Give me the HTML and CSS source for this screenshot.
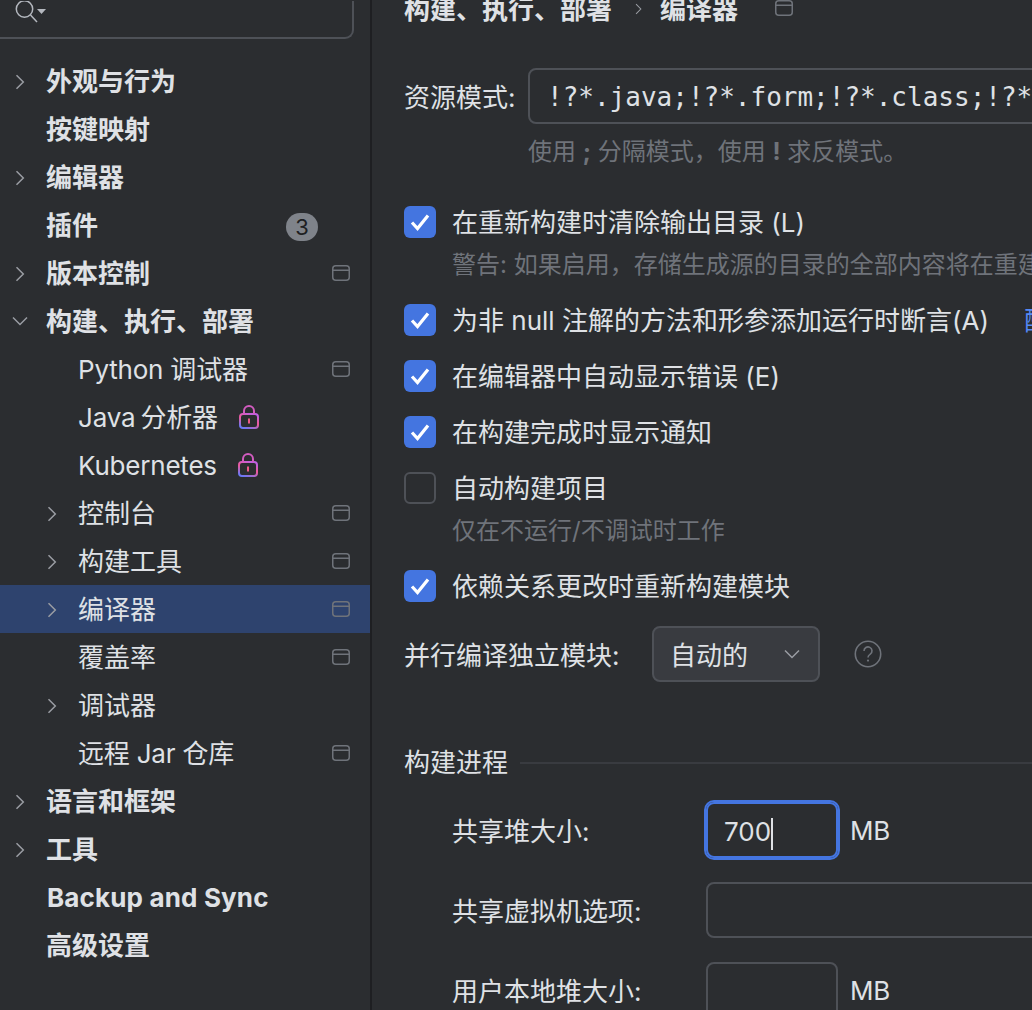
FILE: index.html
```html
<!DOCTYPE html>
<html lang="zh">
<head>
  <meta charset="utf-8">
  <title>设置 - 编译器</title>
  <link rel="stylesheet" href="styles.css">
</head>
<body>
  <svg class="defs" width="0" height="0">
    <defs>
      <linearGradient id="lockgrad" x1="0.7" y1="0" x2="0.2" y2="1">
        <stop offset="0" stop-color="#c060e0"/>
        <stop offset="0.45" stop-color="#ef5a9a"/>
        <stop offset="1" stop-color="#6a78f5"/>
      </linearGradient>
      <symbol id="win" viewBox="0 0 18 16">
        <rect x="0.75" y="0.75" width="16.5" height="14.5" rx="3" fill="none" stroke="#6f737a" stroke-width="1.5"/>
        <path d="M1 5.25h16" stroke="#6f737a" stroke-width="1.5"/>
      </symbol>
      <symbol id="right" viewBox="0 0 10 16">
        <path d="M1.5 1.2 8.3 8l-6.8 6.8" fill="none" stroke="#9a9da3" stroke-width="1.5"/>
      </symbol>
      <symbol id="down" viewBox="0 0 16 10">
        <path d="M1 1.5 8 8.5l7-7" fill="none" stroke="#9a9da3" stroke-width="1.5"/>
      </symbol>
      <symbol id="lock" viewBox="0 0 20 24">
        <rect x="1" y="9" width="18" height="14" rx="3" fill="none" stroke="url(#lockgrad)" stroke-width="2"/>
        <path d="M5 9V6a5 5 0 0 1 10 0v3" fill="none" stroke="#d25cc0" stroke-width="2"/>
        <path d="M10 13.5v5" stroke="#ef5a8a" stroke-width="2"/>
      </symbol>
      <symbol id="check" viewBox="0 0 32 32">
        <path d="M8 16.5l5.5 6L24 9.5" fill="none" stroke="#fff" stroke-width="3.2"/>
      </symbol>
    </defs>
  </svg>

  <div class="sidebar">
    <div class="search">
      <svg class="search-icon" width="34" height="24" viewBox="0 0 34 24">
        <circle cx="9.5" cy="8" r="8.2" fill="none" stroke="#b4b8bf" stroke-width="1.5"/>
        <path d="M15.5 14l6.5 7" stroke="#b4b8bf" stroke-width="1.5"/>
        <path d="M22 8h9l-4.5 5z" fill="#b4b8bf"/>
      </svg>
    </div>

    <ul class="tree">
      <li class="row top"><span class="arrow"><svg class="chev"><use href="#right"/></svg></span>外观与行为</li>
      <li class="row top"><span class="arrow"></span>按键映射</li>
      <li class="row top"><span class="arrow"><svg class="chev"><use href="#right"/></svg></span>编辑器</li>
      <li class="row top"><span class="arrow"></span>插件<span class="badge">3</span></li>
      <li class="row top"><span class="arrow"><svg class="chev"><use href="#right"/></svg></span>版本控制<svg class="win"><use href="#win"/></svg></li>
      <li class="row top"><span class="arrow"><svg class="chev-down"><use href="#down"/></svg></span>构建、执行、部署</li>
      <li class="row sub"><span class="arrow"></span><span class="latin">Python 调试器</span><svg class="win"><use href="#win"/></svg></li>
      <li class="row sub"><span class="arrow"></span><span class="latin java">Java 分析器</span><svg class="lock"><use href="#lock"/></svg></li>
      <li class="row sub"><span class="arrow"></span><span class="latin only-latin">Kubernetes</span><svg class="lock"><use href="#lock"/></svg></li>
      <li class="row sub"><span class="arrow"><svg class="chev"><use href="#right"/></svg></span>控制台<svg class="win"><use href="#win"/></svg></li>
      <li class="row sub"><span class="arrow"><svg class="chev"><use href="#right"/></svg></span>构建工具<svg class="win"><use href="#win"/></svg></li>
      <li class="row sub selected"><span class="arrow"><svg class="chev"><use href="#right"/></svg></span>编译器<svg class="win"><use href="#win"/></svg></li>
      <li class="row sub"><span class="arrow"></span>覆盖率<svg class="win"><use href="#win"/></svg></li>
      <li class="row sub"><span class="arrow"><svg class="chev"><use href="#right"/></svg></span>调试器</li>
      <li class="row sub"><span class="arrow"></span><span class="latin">远程 Jar 仓库</span><svg class="win"><use href="#win"/></svg></li>
      <li class="row top"><span class="arrow"><svg class="chev"><use href="#right"/></svg></span>语言和框架</li>
      <li class="row top"><span class="arrow"><svg class="chev"><use href="#right"/></svg></span>工具</li>
      <li class="row top"><span class="arrow"></span><span class="backup only-latin">Backup and Sync</span></li>
      <li class="row top"><span class="arrow"></span>高级设置</li>
    </ul>
  </div>

  <div class="main">
    <div class="crumbs">
      <span>构建、执行、部署</span>
      <svg class="crumb-sep"><use href="#right"/></svg>
      <span>编译器</span>
      <svg class="crumb-win"><use href="#win"/></svg>
    </div>

    <div class="pattern-row">
      <label class="pattern-label">资源模式:</label>
      <div class="input pattern-input">!?*.java;!?*.form;!?*.class;!?*.groovy;!?*.scala;!?*.flex</div>
    </div>
    <p class="hint pattern-hint">使用 <b>;</b> 分隔模式，使用 <b>!</b> 求反模式。</p>

    <div class="check-row first"><span class="box on"><svg><use href="#check"/></svg></span>在重新构建时清除输出目录 (L)</div>
    <p class="hint check-hint">警告: 如果启用，存储生成源的目录的全部内容将在重建时清除</p>
    <div class="check-row after-hint"><span class="box on"><svg><use href="#check"/></svg></span>为非 null 注解的方法和形参添加运行时断言(A)<a class="link">配置</a></div>
    <div class="check-row"><span class="box on"><svg><use href="#check"/></svg></span>在编辑器中自动显示错误 (E)</div>
    <div class="check-row"><span class="box on"><svg><use href="#check"/></svg></span>在构建完成时显示通知</div>
    <div class="check-row"><span class="box"></span>自动构建项目</div>
    <p class="hint check-hint">仅在不运行/不调试时工作</p>
    <div class="check-row after-hint"><span class="box on"><svg><use href="#check"/></svg></span>依赖关系更改时重新构建模块</div>

    <div class="combo-row">
      <label>并行编译独立模块:</label>
      <div class="combo">自动的<svg class="combo-arrow"><use href="#down"/></svg></div>
      <svg class="help" width="28" height="28" viewBox="0 0 28 28">
        <circle cx="14" cy="14" r="12.7" fill="none" stroke="#6f737a" stroke-width="1.6"/>
        <path d="M10 11a4 4 0 1 1 6.3 3.2c-1.4 1-2.3 1.7-2.3 3.3" fill="none" stroke="#6f737a" stroke-width="1.6"/>
        <circle cx="14" cy="20.6" r="1.1" fill="#6f737a"/>
      </svg>
    </div>

    <div class="section"><span class="section-title">构建进程</span><i class="section-line"></i></div>

    <div class="field">
      <label>共享堆大小:</label>
      <div class="input small focused">700<i class="caret"></i></div>
      <span class="unit">MB</span>
    </div>
    <div class="field">
      <label>共享虚拟机选项:</label>
      <div class="input wide"></div>
    </div>
    <div class="field">
      <label>用户本地堆大小:</label>
      <div class="input small"></div>
      <span class="unit">MB</span>
    </div>
  </div>
</body>
</html>
```

FILE: styles.css
```css
* {
  box-sizing: border-box;
}

html, body {
  height: 1010px;
  margin: 0;
  overflow: hidden;
}

body {
  display: flex;
  background-color: #2b2d30;
  color: #dfe1e5;
  font-family: Inter, "Noto Sans CJK SC", sans-serif;
  font-size: 26px;
}

.defs {
  position: absolute;
}

/* left tree */
.sidebar {
  width: 372px;
  flex: none;
  border-right: 2px solid #1e1f22;
}

.search {
  width: 354px;
  height: 38px;
  border-right: 2px solid #4e5157;
  border-bottom: 2px solid #4e5157;
  border-bottom-right-radius: 9px;
  padding-left: 15px;
}

.search-icon {
  display: block;
  margin-top: 1px;
}

.tree {
  list-style: none;
  margin: 18px 0 0;
  padding: 0;
}

.row {
  display: flex;
  align-items: center;
  height: 48px;
  padding-right: 20px;
  padding-bottom: 4px;
  white-space: nowrap;
}

.top {
  font-weight: 700;
}

.sub {
  padding-left: 32px;
}

.selected {
  background-color: #2e436e;
}

.arrow {
  display: flex;
  width: 46px;
  flex: none;
  margin-top: 6px;
  padding-left: 15px;
}

.chev {
  width: 10px;
  height: 16px;
}

.chev-down {
  width: 16px;
  height: 10px;
  margin-top: -2px;
  margin-left: -3px;
}

.latin {
  letter-spacing: -0.2px;
}

.java {
  word-spacing: -2px;
}

.backup {
  margin-left: 1px;
  letter-spacing: 0.15px;
}

.only-latin {
  margin-top: 4px;
}

.win {
  width: 18px;
  height: 16px;
  margin-left: auto;
  margin-top: 4px;
}

.lock {
  width: 20px;
  height: 24px;
  margin-left: 21px;
  margin-top: 4px;
}

.badge {
  width: 32px;
  height: 28px;
  margin-left: auto;
  margin-right: 32px;
  margin-top: 8px;
  border-radius: 14px;
  background-color: #7f838a;
  color: #1e1f22;
  font-size: 22px;
  font-weight: 400;
  line-height: 28px;
  text-align: center;
}

/* right panel */
.main {
  flex: 1;
  min-width: 0;
  overflow: hidden;
  padding-left: 32px;
  white-space: nowrap;
}

.crumbs {
  display: flex;
  align-items: flex-end;
  height: 22px;
  font-weight: 700;
  line-height: 24px;
  overflow: hidden;
}

.crumb-sep {
  width: 7px;
  height: 12px;
  margin: 0 18px 7px 23px;
}

.crumb-win {
  width: 18px;
  height: 16px;
  margin: 0 0 6px 37px;
}

.pattern-row {
  display: flex;
  align-items: center;
  margin-top: 46px;
}

.pattern-label {
  width: 124px;
  flex: none;
  padding-bottom: 2px;
}

.input {
  height: 56px;
  border: 2px solid #4e5157;
  border-radius: 8px;
  background-color: #2b2d30;
}

.pattern-input {
  flex: none;
  width: 900px;
  padding-left: 17px;
  font-family: "DejaVu Sans Mono", monospace;
  line-height: 54px;
  overflow: hidden;
}

.hint {
  margin: 0;
  color: #6f737a;
  font-size: 24px;
  line-height: 36px;
}

.hint b {
  font-family: Inter, sans-serif;
  font-weight: 700;
}

.pattern-hint {
  margin: 10px 0 0 124px;
}

.check-row {
  display: flex;
  align-items: flex-start;
  height: 32px;
  margin-top: 24px;
  line-height: 34px;
}

.check-row.first {
  margin-top: 36px;
}

.check-row.after-hint {
  margin-top: 21px;
}

.check-hint {
  margin: 9px 0 0 48px;
}

.box {
  width: 32px;
  height: 32px;
  flex: none;
  margin-right: 16px;
  border: 2px solid #4e5157;
  border-radius: 6px;
}

.box.on {
  border: none;
  background-color: #4475e0;
}

.box svg {
  display: block;
  width: 32px;
  height: 32px;
}

.link {
  margin-left: 35px;
  color: #548af7;
}

.combo-row {
  display: flex;
  align-items: center;
  margin-top: 24px;
}

.combo-row label {
  width: 248px;
  flex: none;
  padding-bottom: 2px;
}

.combo {
  display: flex;
  align-items: center;
  width: 168px;
  height: 56px;
  padding-left: 16px;
  padding-bottom: 2px;
  border: 2px solid #4e5157;
  border-radius: 8px;
  background-color: #393b40;
}

.combo-arrow {
  width: 16px;
  height: 10px;
  margin-left: 36px;
  margin-top: 2px;
}

.help {
  margin-left: 34px;
}

.section {
  display: flex;
  align-items: center;
  height: 36px;
  margin-top: 62px;
}

.section-title {
  margin-top: -4px;
}

.section-line {
  flex: 1;
  height: 2px;
  margin-left: 12px;
  margin-top: 2px;
  background-color: #393b40;
}

.field {
  display: flex;
  align-items: center;
  margin-top: 24px;
  padding-left: 48px;
}

.section + .field {
  margin-top: 22px;
}

.field label {
  width: 254px;
  flex: none;
  padding-bottom: 2px;
}

.small {
  width: 132px;
  flex: none;
  padding-left: 16px;
  line-height: 56px;
}

.wide {
  width: 500px;
  flex: none;
}

.focused {
  border-color: #4475e0;
  outline: 2px solid #4475e0;
}

.caret {
  display: inline-block;
  width: 2px;
  height: 32px;
  vertical-align: middle;
  background-color: #dfe1e5;
}

.unit {
  margin-left: 12px;
  letter-spacing: -0.3px;
}
```
